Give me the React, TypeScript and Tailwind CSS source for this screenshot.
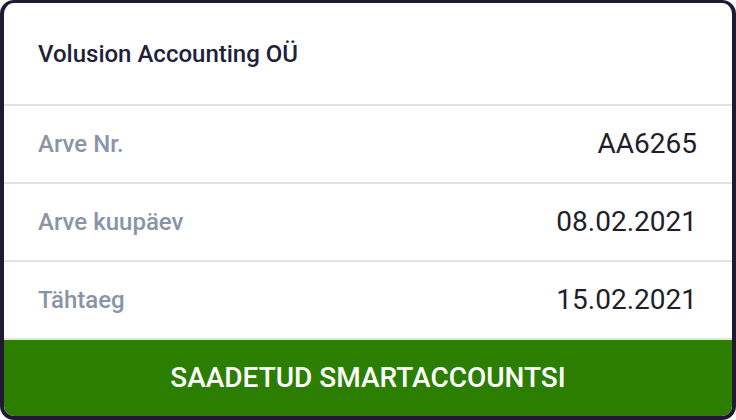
import React from "react";

const rows = [
  { label: "Arve Nr.", value: "AA6265" },
  { label: "Arve kuupäev", value: "08.02.2021" },
  { label: "Tähtaeg", value: "15.02.2021" },
];

export default function App() {
  return (
    <div className="w-[736px] h-[420px] bg-white" style={{ fontFamily: "Roboto, 'Noto Sans', sans-serif" }}>
      <div className="w-full h-full border-4 border-t-[3px] border-[#221a33] rounded-[14px] overflow-hidden flex flex-col bg-white">
        <div className="h-[101px] flex items-center px-[34px] text-[24px] font-medium text-[#22213a]">
          Volusion Accounting OÜ
        </div>
        {rows.map((r) => (
          <div key={r.label} className="h-[78px] border-t-2 border-[#e2e1e6] flex items-center justify-between pl-[34px] pr-[35px]">
            <span className="text-[24px] font-medium text-[#8b94a5]">{r.label}</span>
            <span className="text-[28px] text-[#1f1e2a]">{r.value}</span>
          </div>
        ))}
        <div className="flex-1 border-t-2 border-[#e2e1e6] bg-[#2b7e00] flex items-center justify-center text-white text-[28px] font-medium">
          SAADETUD SMARTACCOUNTSI
        </div>
      </div>
    </div>
  );
}
